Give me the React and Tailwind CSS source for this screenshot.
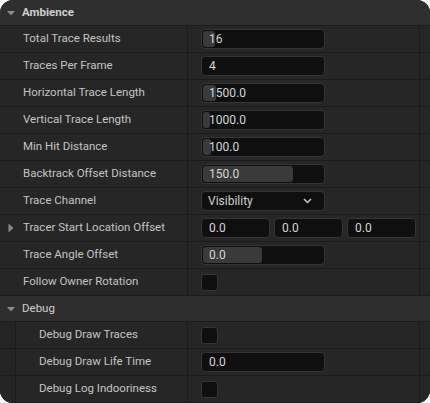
import React from "react";

const Caret = ({ open }) =>
  open ? (
    <svg width="10" height="10" viewBox="0 0 10 10" className="shrink-0">
      <path d="M1 3 L9 3 L5 7.5 Z" fill="#8a8a8a" />
    </svg>
  ) : (
    <svg width="10" height="12" viewBox="0 0 10 12" className="shrink-0">
      <path d="M2.5 1.5 L7.5 6 L2.5 10.5 Z" fill="#8a8a8a" />
    </svg>
  );

const NumberBox = ({ value, fill, width = "w-[124px]" }) => (
  <div className={`relative flex items-center h-[20px] ${width} rounded-[4px] bg-[#0f0f0f] border border-[#353535] overflow-hidden`}>
    {fill != null && (
      <div className="absolute left-[1px] top-[1px] bottom-[1px] rounded-[3px] bg-[#3a3a3a]" style={{ width: fill }} />
    )}
    <span className="relative pl-[7px] text-[12px] leading-none text-[#d6d6d6]">{value}</span>
  </div>
);

const Check = () => <div className="h-[17px] w-[17px] rounded-[3px] bg-[#0f0f0f] border border-[#353535]" />;

const Row = ({ label, children, indent, caret }) => (
  <div className="flex h-[27px] border-b border-[#1b1b1b] bg-[#262626]">
    {indent && <div className="w-[16px] border-r border-[#1b1b1b] bg-[#242424]" />}
    <div className={`flex items-center ${indent ? "w-[172px] pl-[23px]" : "w-[188px] pl-[23px]"} border-r border-[#1b1b1b] relative`}>
      {caret && <div className="absolute left-[6px] top-[7px]"><Caret /></div>}
      <span className="text-[11.5px] text-[#c4c4c4] whitespace-nowrap">{label}</span>
    </div>
    <div className="flex flex-1 items-center gap-[4px] pl-[13px] border-r border-[#1b1b1b]">{children}</div>
    <div className="w-[10px]" />
  </div>
);

const Header = ({ title }) => (
  <div className="flex h-[26px] items-center gap-[6px] pl-[6px] bg-[#2e2e2e] border-b border-[#1b1b1b]">
    <Caret open />
    <span className="text-[11.5px] text-[#cfcfcf]">{title}</span>
  </div>
);

export default function App() {
  return (
    <div className="bg-white w-[430px] h-[403px]" style={{ fontFamily: "Roboto, 'Noto Sans', sans-serif" }}>
      <div className="w-[430px] h-[403px] rounded-[13px] overflow-hidden bg-[#262626]">
        <div className="h-[25px] flex items-center gap-[6px] pl-[6px] bg-[#2f2f2f] border-b border-[#1b1b1b] box-content">
          <Caret open />
          <span className="text-[11.5px] font-bold text-[#d0d0d0]">Ambience</span>
        </div>
        <Row label="Total Trace Results"><NumberBox value="16" fill={12} /></Row>
        <Row label="Traces Per Frame"><NumberBox value="4" /></Row>
        <Row label="Horizontal Trace Length"><NumberBox value="1500.0" fill={13} /></Row>
        <Row label="Vertical Trace Length"><NumberBox value="1000.0" fill={7} /></Row>
        <Row label="Min Hit Distance"><NumberBox value="100.0" fill={8} /></Row>
        <Row label="Backtrack Offset Distance"><NumberBox value="150.0" fill={90} /></Row>
        <Row label="Trace Channel">
          <div className="flex h-[20px] w-[124px] items-center justify-between rounded-[4px] bg-[#0f0f0f] border border-[#353535] pl-[6px] pr-[12px]">
            <span className="text-[12px] leading-none text-[#d0d0d0]">Visibility</span>
            <svg width="9" height="6" viewBox="0 0 9 6">
              <path d="M1 1 L4.5 4.5 L8 1" stroke="#c8c8c8" strokeWidth="1.5" fill="none" />
            </svg>
          </div>
        </Row>
        <Row label="Tracer Start Location Offset" caret>
          <NumberBox value="0.0" width="w-[69px]" />
          <NumberBox value="0.0" width="w-[69px]" />
          <NumberBox value="0.0" width="w-[69px]" />
        </Row>
        <Row label="Trace Angle Offset"><NumberBox value="0.0" fill={59} /></Row>
        <Row label="Follow Owner Rotation"><Check /></Row>
        <Header title="Debug" />
        <Row label="Debug Draw Traces" indent><Check /></Row>
        <Row label="Debug Draw Life Time" indent><NumberBox value="0.0" /></Row>
        <Row label="Debug Log Indooriness" indent><Check /></Row>
      </div>
    </div>
  );
}
